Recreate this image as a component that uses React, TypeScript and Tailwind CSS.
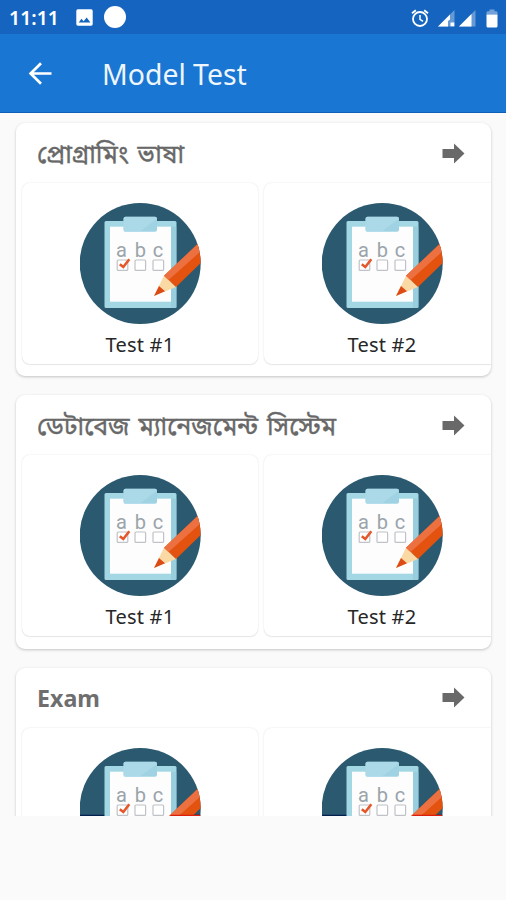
function ClipboardArt({ id, edge }: { id: string; edge?: boolean }) {
  return (
    <svg viewBox="0 0 121 121" className="block h-[121px] w-[121px]">
      <defs>
        <clipPath id={id}>
          <circle cx="60.2" cy="60.5" r="60.5" />
        </clipPath>
      </defs>
      <g clipPath={`url(#${id})`}>
        <rect width="121" height="121" fill="#2b5970" />
        {edge && <rect y="66.7" width="121" height="3" fill="#04204f" />}
        <rect x="24.5" y="18" width="72" height="87" rx="1.5" fill="#a3d7e4" />
        <rect x="91" y="23.7" width="5.5" height="81" fill="#8dc5d5" opacity="0.5" />
        <rect x="30" y="23.7" width="61" height="75" fill="#fdfdfe" />
        <rect x="43.5" y="13.7" width="33.5" height="15" rx="2" fill="#9fd3e3" />
        <path d="M45.5 13.7h29.5q2 0 2 2L59.5 28.7H45.5q-2 0-2-2v-11q0-2 2-2z" fill="#b1dcea" opacity="0.7" />
        <g fill="#9aa4aa" fontFamily="Roboto, sans-serif" fontSize="20" textAnchor="middle">
          <text x="41.5" y="54">a</text>
          <text x="60.4" y="54">b</text>
          <text x="78" y="54">c</text>
        </g>
        <g fill="#fff" stroke="#bfc2c6" strokeWidth="1.2">
          <rect x="37.2" y="57" width="10.6" height="10.4" rx="1" />
          <rect x="55" y="57" width="10.6" height="10.4" rx="1" />
          <rect x="73" y="57" width="10.6" height="10.4" rx="1" />
        </g>
        <path d="M39.8 61.2 43.3 64 49.3 56.3" fill="none" stroke="#e4582b" strokeWidth="2.6" />
        <path d="M84 72.8 96 84 74 93z" fill="#fbd9a5" />
        <path d="M79 83 85 88.2 74 93z" fill="#dc4a15" />
        <path d="M84 72.8 125 34 130 51 96 84z" fill="#e4520f" />
        <path d="M84 72.8 125 34 125 44.5 88.5 77z" fill="#ec7040" />
        {edge && <path d="M91 66.7H120V70H88z" fill="#dc1e0c" />}
      </g>
    </svg>
  );
}

function TestTile({ id, label, edge }: { id: string; label?: string; edge?: boolean }) {
  return (
    <div className="flex h-[181px] w-[236px] shrink-0 flex-col items-center rounded-[8px] bg-white pt-[20px] shadow-[0_0_2px_rgba(0,0,0,0.12),0_1px_1px_rgba(0,0,0,0.07)]">
      <ClipboardArt id={id} edge={edge} />
      {label && (
        <div className="mt-[7px] text-[20px] leading-[28px] tracking-[0.2px] text-[#272727]">{label}</div>
      )}
    </div>
  );
}

function Section({ id, title, labels, edge }: { id: string; title: string; labels: string[]; edge?: boolean }) {
  return (
    <section className="h-[253.3px] w-[475px] shrink-0 overflow-hidden rounded-[9px] bg-white shadow-[0_1px_3px_rgba(0,0,0,0.22)]">
      <div className="flex h-[60px] items-center justify-between pl-[21px] pr-[26px]">
        {edge ? (
          <h2 className="text-[23.2px] font-bold leading-[32px] text-[#6e6e6e]">{title}</h2>
        ) : (
          <h2 className="text-[25px] font-normal leading-[32px] text-[#686868] [-webkit-text-stroke:0.4px_#686868] [word-spacing:2.4px]">{title}</h2>
        )}
        <svg viewBox="0 0 23 21" className="h-[21px] w-[23px]">
          <path d="M0.5 6H12V0.5L22.5 10.5 12 20.5V15H0.5z" fill="#696969" />
        </svg>
      </div>
      <div className="flex gap-[6px] pl-[6px]">
        <TestTile id={`${id}-1`} label={labels[0]} edge={edge} />
        <TestTile id={`${id}-2`} label={labels[1]} edge={edge} />
      </div>
    </section>
  );
}

function StatusBar() {
  return (
    <div className="flex h-[34px] items-center justify-between bg-[#1565c0] pl-[9px] pr-[8px] text-white">
      <div className="flex items-center">
        <span className="w-[67px] pt-[1px] text-[19.5px] font-semibold leading-none">11:11</span>
        <svg viewBox="0 0 17 17" className="h-[17px] w-[17px]">
          <rect x="0.3" y="0.3" width="16.4" height="16.4" rx="1.6" fill="#fff" />
          <path d="M2.7 13.5 5.5 9.8 7.6 12.2 10.7 8.5 14.4 13.5z" fill="#1565c0" />
        </svg>
        <span className="ml-[11px] h-[22px] w-[22px] rounded-full bg-white" />
      </div>
      <div className="flex items-center pt-[2px]">
        <svg viewBox="0 0 18 18" className="h-[18px] w-[18px]" fill="none" stroke="#fff">
          <circle cx="9" cy="10" r="7" strokeWidth="1.8" />
          <path d="M9 6V10.3L12 12.4" strokeWidth="1.5" />
          <path d="M1 4.3 4.8 1.2M17 4.3 13.2 1.2" strokeWidth="1.8" />
        </svg>
        <svg viewBox="0 0 17 17" className="ml-[9px] h-[17px] w-[17px]">
          <path d="M0 16.5 16.5 0V16.5z" fill="#fff" opacity="0.35" />
          <path d="M0 16.5 12 4.5V9.5L10 11V16.5z" fill="#fff" />
          <rect x="12.5" y="12.5" width="3.8" height="3.8" fill="#fff" />
        </svg>
        <svg viewBox="0 0 17 17" className="ml-[4px] h-[17px] w-[17px]">
          <path d="M0 16.5 16.5 0V16.5z" fill="#fff" opacity="0.35" />
          <path d="M0 16.5 12.5 4V16.5z" fill="#fff" />
        </svg>
        <svg viewBox="0 0 12 19" className="ml-[10px] h-[19px] w-[12px]">
          <path d="M0.5 5.5V3.5Q.5 2.3 2 2.3H3.5V0.5H8.5V2.3H10Q11.5 2.3 11.5 3.5V5.5z" fill="#fff" opacity="0.4" />
          <path d="M0.5 5.5H11.5V17Q11.5 18.5 10 18.5H2Q.5 18.5.5 17z" fill="#fff" />
        </svg>
      </div>
    </div>
  );
}

export default function App() {
  return (
    <div className="h-[900px] w-[506px] overflow-hidden bg-[#fafafa] font-['Noto_Sans','Noto_Sans_Bengali',sans-serif]">
      <StatusBar />
      <header className="flex h-[79px] items-center border-b border-[#0d5fb8] bg-[#1976d2] pl-[28px]">
        <svg viewBox="0 0 24 24" className="h-[24px] w-[24px]" fill="none" stroke="#fff" strokeWidth="2.7">
          <path d="M23.5 12.5H2.8M13 2.2 2.6 12.5 13 22.8" />
        </svg>
        <h1 className="ml-[50px] pt-[2px] text-[28.4px] leading-none text-[#edf5fd]">Model Test</h1>
      </header>
      <main className="flex h-[703px] flex-col gap-[19.1px] overflow-hidden pl-[16px] pt-[10px]">
        <Section id="programming" title="প্রোগ্রামিং ভাষা" labels={["Test #1", "Test #2"]} />
        <Section id="database" title="ডেটাবেজ ম্যানেজমেন্ট সিস্টেম" labels={["Test #1", "Test #2"]} />
        <Section id="exam" title="Exam" labels={[]} edge />
      </main>
    </div>
  );
}
